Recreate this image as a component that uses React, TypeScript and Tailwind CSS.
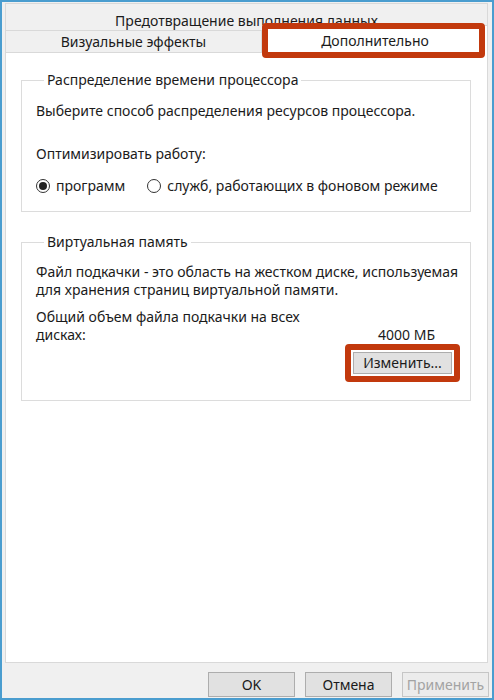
import React from "react";

const font = { fontFamily: '"Noto Sans", "Open Sans", sans-serif' };

function Radio({ checked, label }: { checked?: boolean; label: string }) {
  return (
    <label className="flex items-center gap-[6px]">
      <span className="w-[14px] h-[14px] rounded-full border border-[#333] bg-white flex items-center justify-center">
        {checked && <span className="w-[8px] h-[8px] rounded-full bg-[#222]" />}
      </span>
      <span>{label}</span>
    </label>
  );
}

function DialogButton({ children, disabled }: { children: React.ReactNode; disabled?: boolean }) {
  return (
    <button
      disabled={disabled}
      className={`w-[87px] h-[25px] border text-[14px] leading-none ${
        disabled
          ? "border-[#c6c6c6] bg-[#ececec] text-[#a3a3a3]"
          : "border-[#adadad] bg-[#e1e1e1] text-[#1a1a1a]"
      }`}
    >
      {children}
    </button>
  );
}

export default function App() {
  return (
    <div
      style={font}
      className="w-[494px] h-[700px] border-2 border-[#4a9dcf] bg-[#f0f0f0] flex flex-col text-[14px] leading-[18px] text-[#1b1b1b] overflow-hidden"
    >
      {/* Tabs */}
      <div className="pl-[3px] pr-[4px] pt-[1px]">
        <div className="h-[27px] border border-[#d9d9d9] border-b-0 flex items-center justify-center pt-[7px]">
          Предотвращение выполнения данных
        </div>
        <div className="flex h-[22px]">
          <div className="w-[257px] border border-[#d9d9d9] border-b-0 flex items-center justify-center">
            Визуальные эффекты
          </div>
          <div className="relative flex-1">
            <div className="absolute left-0 right-0 -top-[5px] bottom-[-1px] bg-white border border-[#d9d9d9] border-b-0 flex items-center justify-center pt-[2px]">
              Дополнительно
            </div>
            <div className="absolute left-0 right-[3px] -top-[7px] -bottom-[6px] border-[6px] border-[#c2390d] rounded-[4px]" />
          </div>
        </div>
      </div>

      {/* Panel */}
      <div className="mx-[3px] mr-[4px] h-[611px] bg-white border border-[#d9d9d9] px-[15px] pt-[18px]">
        <fieldset className="min-w-0 border border-[#dcdcdc] pl-[14px] pr-[14px] pb-[16px] mr-[1px]">
          <legend className="ml-[8px] px-[3px]">Распределение времени процессора</legend>
          <p className="mt-[13px]">Выберите способ распределения ресурсов процессора.</p>
          <p className="mt-[25px]">Оптимизировать работу:</p>
          <div className="mt-[14px] flex gap-[22px]">
            <Radio checked label="программ" />
            <Radio label="служб, работающих в фоновом режиме" />
          </div>
        </fieldset>

        <fieldset className="min-w-0 mt-[21px] border border-[#dcdcdc] pl-[14px] pr-[35px] pb-[18px] mr-[1px]">
          <legend className="ml-[8px] px-[3px]">Виртуальная память</legend>
          <p className="mt-[12px] whitespace-nowrap">
            Файл подкачки - это область на жестком диске, используемая
            <br />
            для хранения страниц виртуальной памяти.
          </p>
          <div className="mt-[9px] flex items-end justify-between">
            <p>
              Общий объем файла подкачки на всех
              <br />
              дисках:
            </p>
            <span>4000 МБ</span>
          </div>
          <div className="flex justify-end -mr-[25px]">
            <div className="border-[6px] border-[#c2390d] rounded-[4px] p-[2px]">
              <button className="w-[99px] h-[22px] border border-[#adadad] bg-[#e1e1e1] text-[14px] leading-none">
                Изменить...
              </button>
            </div>
          </div>
        </fieldset>
      </div>

      {/* Footer */}
      <div className="flex-1 flex justify-end items-start gap-[10px] pt-[9px] pr-[3px]">
        <DialogButton>OK</DialogButton>
        <DialogButton>Отмена</DialogButton>
        <DialogButton disabled>Применить</DialogButton>
      </div>
    </div>
  );
}
